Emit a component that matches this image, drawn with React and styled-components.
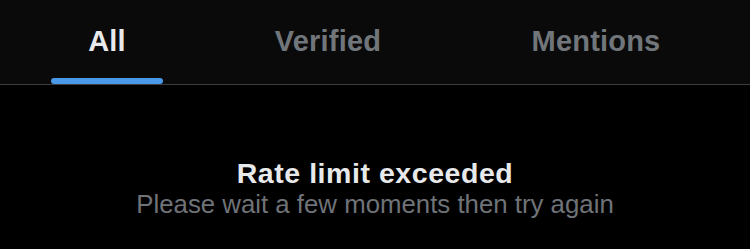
import React from "react";
import styled, { createGlobalStyle } from "styled-components";

const Global = createGlobalStyle`
  html, body { margin: 0; padding: 0; background: #000; }
  body { font-family: "Liberation Sans", Arial, sans-serif; }
`;

const Page = styled.div`
  width: 750px;
  height: 249px;
  background: #000;
  display: flex;
  flex-direction: column;
  overflow: hidden;
`;

const TabBar = styled.nav`
  display: grid;
  grid-template-columns: 214px 228px 1fr;
  height: 84px;
  background: #0a0a0b;
  border-bottom: 1px solid #3b3e41;
`;

const Tab = styled.div`
  position: relative;
  display: flex;
  justify-content: center;
  padding-top: 25px;
  font-size: 29px;
  font-weight: 700;
  letter-spacing: 0.2px;
  color: ${(p) => (p.$active ? "#e7e9ea" : "#71767b")};
`;

const Indicator = styled.span`
  position: absolute;
  left: 50%;
  bottom: 0;
  width: 112px;
  height: 6px;
  margin-left: -56px;
  border-radius: 3px;
  background: #4a99e9;
`;

const Message = styled.section`
  display: flex;
  flex-direction: column;
  align-items: center;
  padding-top: 72px;
`;

const Title = styled.h2`
  margin: 0;
  font-size: 28.5px;
  line-height: 32px;
  font-weight: 700;
  letter-spacing: 0.55px;
  color: #e7e9ea;
`;

const Subtitle = styled.p`
  margin: 0;
  font-size: 25.8px;
  line-height: 30px;
  color: #6f7378;
`;

const tabs = [
  { label: "All", active: true },
  { label: "Verified" },
  { label: "Mentions" },
];

export default function App() {
  return (
    <Page>
      <Global />
      <TabBar>
        {tabs.map((t) => (
          <Tab key={t.label} $active={t.active}>
            {t.label}
            {t.active && <Indicator />}
          </Tab>
        ))}
      </TabBar>
      <Message>
        <Title>Rate limit exceeded</Title>
        <Subtitle>Please wait a few moments then try again</Subtitle>
      </Message>
    </Page>
  );
}
